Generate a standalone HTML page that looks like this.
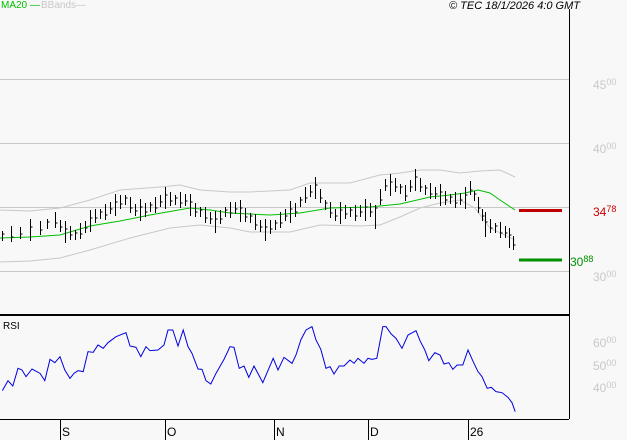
<!DOCTYPE html>
<html><head><meta charset="utf-8"><style>
html,body{margin:0;padding:0;background:#f8f8f8;}
body{width:627px;height:440px;overflow:hidden;position:relative;font-family:"Liberation Sans",sans-serif;}
.t{position:absolute;font-size:11px;white-space:nowrap;}
.g{color:#c8c8c8;font-size:12px}
.g sup,.r sup{font-size:9px;vertical-align:4px}
</style></head><body>
<svg width="627" height="440" style="position:absolute;left:0;top:0" xmlns="http://www.w3.org/2000/svg">
<g stroke="#c8c8c8" stroke-width="1" fill="none" shape-rendering="crispEdges">
<line x1="0" y1="79.5" x2="569" y2="79.5"/>
<line x1="0" y1="143.5" x2="569" y2="143.5"/>
<line x1="0" y1="207.5" x2="569" y2="207.5"/>
<line x1="0" y1="271.5" x2="569" y2="271.5"/>
</g>
<polyline fill="none" stroke="#c8c8c8" points="0,210 30,211 60,208 90,200 120,190 160,187 180,185 200,190 230,192 250,192 290,190 310,183 350,183 380,175 400,173 420,170 440,170 460,173 480,171 500,170 515,177"/>
<polyline fill="none" stroke="#c8c8c8" points="0,262 30,261 60,258 90,250 130,238 170,228 200,225 230,228 250,232 290,232 320,225 360,226 380,225 400,217 420,208 440,203 460,200 475,208 490,228 515,240"/>
<polyline fill="none" stroke="#00c000" points="0,238 30,237 60,235 90,226 120,221 150,215 190,208 210,210 230,213 270,215 300,213 330,208 370,207 400,204 430,197 450,195 465,193 478,190 490,193 500,200 515,210"/>
<path stroke="#000" stroke-width="1" fill="none" shape-rendering="crispEdges" d="
M2.5 231V241M2.5 234h2 M11.5 226V242M11.5 237h2 M20.5 227V239M20.5 234h2 M30.5 219V241M30.5 227h2 M40.5 221V235M40.5 230h2
M47.5 219V229M47.5 222h2 M55.5 212V228M55.5 223h2 M60.5 220V232M60.5 227h2 M65.5 221V243M65.5 229h2 M70.5 226V240M70.5 235h2
M75.5 230V240M75.5 233h2 M80.5 223V239M80.5 234h2 M85.5 221V233M85.5 228h2 M90.5 210V232M90.5 218h2 M95.5 209V223M95.5 218h2
M100.5 209V219M100.5 212h2 M105.5 204V220M105.5 215h2 M110.5 202V214M110.5 209h2 M115.5 194V216M115.5 202h2 M120.5 195V209M120.5 204h2
M125.5 195V205M125.5 198h2 M130.5 197V213M130.5 208h2 M135.5 204V216M135.5 211h2 M140.5 199V221M140.5 207h2 M145.5 203V217M145.5 212h2
M150.5 202V212M150.5 205h2 M155.5 197V213M155.5 208h2 M160.5 195V207M160.5 202h2 M165.5 187V209M165.5 195h2 M170.5 192V206M170.5 201h2
M175.5 195V205M175.5 198h2 M180.5 192V208M180.5 203h2 M185.5 194V206M185.5 201h2 M190.5 194V216M190.5 202h2 M195.5 203V217M195.5 212h2
M200.5 207V217M200.5 210h2 M205.5 207V223M205.5 218h2 M210.5 212V224M210.5 219h2 M215.5 211V233M215.5 219h2 M220.5 210V224M220.5 219h2
M225.5 207V217M225.5 210h2 M230.5 202V218M230.5 213h2 M235.5 202V214M235.5 209h2 M240.5 200V222M240.5 208h2 M245.5 208V222M245.5 217h2
M250.5 213V223M250.5 216h2 M255.5 214V230M255.5 225h2 M260.5 220V232M260.5 227h2 M265.5 219V241M265.5 227h2 M270.5 220V234M270.5 229h2
M275.5 220V230M275.5 223h2 M280.5 212V228M280.5 223h2 M285.5 209V221M285.5 216h2 M290.5 201V223M290.5 209h2 M295.5 203V217M295.5 212h2
M300.5 197V207M300.5 200h2 M305.5 187V203M305.5 198h2 M310.5 185V197M310.5 192h2 M315.5 177V199M315.5 185h2 M320.5 189V203M320.5 198h2
M325.5 200V210M325.5 203h2 M330.5 202V218M330.5 213h2 M335.5 209V221M335.5 216h2 M340.5 202V224M340.5 210h2 M345.5 205V219M345.5 214h2
M350.5 207V217M350.5 210h2 M355.5 205V221M355.5 216h2 M360.5 205V217M360.5 212h2 M365.5 199V221M365.5 207h2 M370.5 203V217M370.5 212h2
M375.5 205V229M375.5 208h2 M380.5 189V205M380.5 200h2 M385.5 179V191M385.5 186h2 M390.5 174V196M390.5 182h2 M395.5 178V192M395.5 187h2
M400.5 184V194M400.5 187h2 M405.5 185V201M405.5 196h2 M410.5 180V192M410.5 187h2 M415.5 169V191M415.5 177h2 M420.5 178V192M420.5 187h2
M425.5 185V195M425.5 188h2 M430.5 183V199M430.5 194h2 M435.5 187V199M435.5 194h2 M440.5 184V206M440.5 192h2 M445.5 191V205M445.5 200h2
M450.5 194V204M450.5 197h2 M455.5 192V208M455.5 203h2 M460.5 193V205M460.5 200h2 M465.5 187V209M465.5 195h2 M470.5 181V195M470.5 190h2
M474.5 191V201M474.5 194h2 M478.5 197V213M478.5 208h2 M482.5 209V221M482.5 216h2 M485.5 212V237M485.5 222h2 M490.5 219V233M490.5 228h2
M495.5 223V233M495.5 226h2 M500.5 222V238M500.5 233h2 M505.5 226V238M505.5 233h2 M509.5 228V248M509.5 235h2 M513.5 236V250M513.5 245h2"/>
<line x1="519" y1="210.5" x2="562" y2="210.5" stroke="#c00000" stroke-width="3"/>
<line x1="519" y1="260" x2="562" y2="260" stroke="#009000" stroke-width="3"/>
<g stroke="#000" shape-rendering="crispEdges">
<line x1="569.5" y1="9" x2="569.5" y2="419"/>
<line x1="0" y1="315" x2="569" y2="315" stroke-width="2"/>
<line x1="0" y1="419.5" x2="569" y2="419.5"/>
<line x1="60.5" y1="419" x2="60.5" y2="440"/>
<line x1="165.5" y1="419" x2="165.5" y2="440"/>
<line x1="274.5" y1="419" x2="274.5" y2="440"/>
<line x1="368.5" y1="419" x2="368.5" y2="440"/>
<line x1="468.5" y1="419" x2="468.5" y2="440"/>
</g>
<g transform="translate(0,310) scale(0.4,0.33333)">
<polyline fill="none" stroke="#0000e0" stroke-width="1" vector-effect="non-scaling-stroke" points="6,242 20,212 32,228 45,175 55,180 65,200 80,177 100,190 112,212 125,148 137,158 150,140 162,180 175,205 185,190 195,182 208,185 220,125 233,127 245,105 258,115 270,98 290,80 315,68 325,108 340,112 352,140 365,110 375,122 395,120 410,105 420,60 432,60 445,108 458,60 470,110 480,130 495,177 505,178 515,212 527,222 540,190 560,148 575,110 585,112 598,175 610,168 622,202 635,168 657,218 683,145 695,180 710,142 730,160 740,135 752,90 765,60 780,50 790,90 802,118 815,175 825,170 835,192 848,168 860,168 875,150 885,160 895,145 910,160 920,145 930,148 942,145 957,50 965,50 978,72 990,85 1005,115 1020,75 1040,62 1050,92 1062,120 1072,152 1087,128 1100,135 1110,162 1122,158 1132,178 1143,165 1157,165 1170,120 1183,155 1195,185 1205,200 1218,235 1228,232 1240,245 1255,248 1270,262 1280,278 1288,305"/>
</g>
</svg>
<div class="t" style="left:1px;top:0px;color:#00c000;font-size:10px">MA20 —</div>
<div class="t" style="left:41px;top:0px;color:#c8c8c8;font-size:10px">BBands—</div>
<div class="t" style="left:449px;top:0px;font-style:italic;font-size:11px">© TEC 18/1/2026 4:0 GMT</div>
<div class="t g" style="left:593px;top:77px">45<sup>00</sup></div>
<div class="t g" style="left:593px;top:141px">40<sup>00</sup></div>
<div class="t g" style="left:593px;top:269px">30<sup>00</sup></div>
<div class="t r" style="left:593px;top:204px;color:#d00000;font-size:12px">34<sup>78</sup></div>
<div class="t r" style="left:570px;top:254px;color:#009000;font-size:12px">30<sup>88</sup></div>
<div class="t g" style="left:593px;top:335px">60<sup>00</sup></div>
<div class="t g" style="left:593px;top:358px">50<sup>00</sup></div>
<div class="t g" style="left:593px;top:380px">40<sup>00</sup></div>
<div class="t" style="left:3px;top:321px;font-size:10px">RSI</div>
<div class="t" style="left:62px;top:425px;font-size:12px">S</div>
<div class="t" style="left:167px;top:425px;font-size:12px">O</div>
<div class="t" style="left:276px;top:425px;font-size:12px">N</div>
<div class="t" style="left:370px;top:425px;font-size:12px">D</div>
<div class="t" style="left:470px;top:425px;font-size:12px">26</div>
</body></html>
